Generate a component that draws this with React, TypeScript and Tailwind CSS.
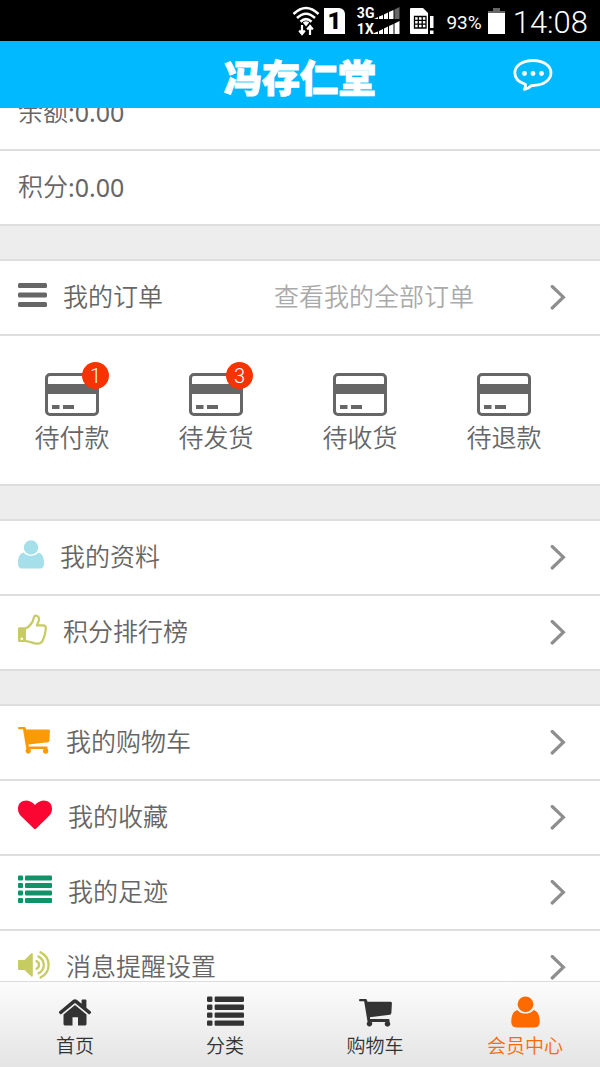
import React from 'react';

type IconProps = { className?: string };

const BarsIcon: React.FC<IconProps> = ({ className }) => (
  <svg className={className} width="29" height="32" viewBox="0 0 29 32" fill="currentColor" aria-hidden="true">
    <rect x="0" y="4" width="29" height="5" rx="1.5" />
    <rect x="0" y="13.5" width="29" height="5" rx="1.5" />
    <rect x="0" y="23" width="29" height="5" rx="1.5" />
  </svg>
);

const UserIcon: React.FC<IconProps & { width?: number; height?: number }> = ({ className, width = 26, height = 32 }) => (
  <svg className={className} width={width} height={height} viewBox="0 0 26 32" fill="currentColor" aria-hidden="true">
    <circle cx="13" cy="8.500" r="7.200" />
    <path d="M5.600 13.600C2 14.400 0 18 0 24.400C0 28 1.800 29.600 5 29.600H21C24.200 29.600 26 28 26 24.400C26 18 24 14.400 20.400 13.600C18.500 15.900 16 16.900 13 16.900C10 16.900 7.500 15.900 5.600 13.600Z" />
  </svg>
);

const ThumbIcon: React.FC<IconProps> = ({ className }) => (
  <svg className={className} width="29" height="32" viewBox="0 0 29 32" fill="none" aria-hidden="true">
    <path d="M0 14.500Q0 13.200 1.300 13.200H8V28H1.300Q0 28 0 26.700Z" fill="currentColor" />
    <circle cx="3.800" cy="24.800" r="1.300" fill="#fff" />
    <path
      d="M8 14.100C11 13.500 12.500 10.300 14.200 8.200C15.800 6.200 15.200 1.700 17.600 1.600C20.800 1.500 21.400 4.600 20.600 7.400C20.100 9 19.200 10 18.800 11.400H25C27.300 11.400 28.200 13 27.700 14.700C27.400 16 27.700 16.700 27.300 18C27 19.300 27 20.100 26.500 21.500C26.200 23 25.900 23.700 25.300 25C24.500 28 23.200 29.400 20 29.600C15.500 30 12.500 27.400 8 27.100"
      stroke="currentColor"
      strokeWidth="2.200"
      strokeLinejoin="round"
    />
  </svg>
);

const CartIcon: React.FC<IconProps & { width?: number; height?: number }> = ({ className, width = 32, height = 32 }) => (
  <svg className={className} width={width} height={height} viewBox="0 0 32 32" fill="currentColor" aria-hidden="true">
    <path d="M1 3H6.500Q7.500 3 7.800 4L8.200 5.600H30.500Q32 5.600 31.900 7L31.400 16.500Q31.200 18 29.900 18.200L10.500 20.600L10.800 22.400H28.500Q29.600 22.400 29.600 23.400V25.300Q30.300 26 30.300 27A2.700 2.700 0 1 1 24.900 27Q24.900 25.800 25.800 25.100H12.200Q12.900 25.800 12.900 27A2.700 2.700 0 1 1 8.300 24.900L5 5.200H1Q0 5.200 0 4.100Q0 3 1 3Z" />
  </svg>
);

const HeartIcon: React.FC<IconProps> = ({ className }) => (
  <svg className={className} width="34" height="32" viewBox="0 0 34 32" fill="currentColor" aria-hidden="true">
    <path d="M17 30Q16.300 30 15.800 29.500L4 18.100C1.300 15.500 0 12.800 0 9.900C0 4.500 3.400 1.500 8.600 1.500C12 1.500 14.800 3.700 17 6.100C19.200 3.700 22 1.500 25.400 1.500C30.600 1.500 34 4.500 34 9.900C34 12.800 32.700 15.500 30 18.100L18.200 29.500Q17.700 30 17 30Z" />
  </svg>
);

const ListIcon: React.FC<IconProps & { width?: number; height?: number }> = ({ className, width = 34, height = 32 }) => (
  <svg
    className={className}
    width={width}
    height={height}
    viewBox="0 0 34 32"
    preserveAspectRatio="none"
    fill="currentColor"
    aria-hidden="true"
  >
    {[1.5, 9, 16.5, 24].map((y) => (
      <g key={y}>
        <rect x="0" y={y} width="5" height="5" rx="1" />
        <rect x="7" y={y} width="27" height="5" rx="1" />
      </g>
    ))}
  </svg>
);

const VolumeIcon: React.FC<IconProps> = ({ className }) => (
  <svg className={className} width="32" height="32" viewBox="0 0 32 32" fill="none" aria-hidden="true">
    <path d="M0 12Q0 11 1 11H6.500L13 4.500Q14.800 3.200 14.800 5.300V26.500Q14.800 28.500 13 27.200L6.500 20.900H1Q0 20.900 0 19.900Z" fill="currentColor" />
    <g stroke="currentColor" strokeWidth="2.300" strokeLinecap="round">
      <path d="M18.500 12.100Q21 13.500 21 15.900T18.500 19.700" />
      <path d="M20.500 7.500Q25.800 10.500 25.800 15.900T20.500 24.300" />
      <path d="M22.500 3.300Q30.600 7.500 30.600 15.900T22.500 28.500" />
    </g>
  </svg>
);

const HomeIcon: React.FC<IconProps> = ({ className }) => (
  <svg className={className} width="34" height="32" viewBox="0 0 34 32" fill="currentColor" aria-hidden="true">
    <path d="M5.500 18.500L17 9L28.500 18.500V28Q28.500 29.400 27.100 29.400H20V21.300H14.500V29.400H6.900Q5.500 29.400 5.500 28Z" />
    <path d="M15.200 3.800Q17 2.500 18.800 3.800L23.600 7.800V4.200Q23.600 3.400 24.400 3.400H27.600Q28.400 3.400 28.400 4.200V11.800L32.800 15.500Q33.500 16.200 32.900 16.900L31.900 18.100Q31.200 18.700 30.500 18.100L17 7L3.500 18.100Q2.800 18.700 2.100 18.100L1.100 16.900Q.500 16.200 1.200 15.500Z" />
  </svg>
);

const CardIcon: React.FC<IconProps> = ({ className }) => (
  <svg className={className} width="54" height="43" viewBox="0 0 54 43" aria-hidden="true">
    <rect x="1.500" y="1.500" width="51" height="40" rx="3.500" fill="none" stroke="currentColor" strokeWidth="3" />
    <path d="M1 11H53V21H1ZM7 32H14.500V36H7ZM18 32H29V36H18Z" fill="currentColor" />
  </svg>
);

const Chevron: React.FC<IconProps> = ({ className }) => (
  <svg className={className} width="16" height="26" viewBox="0 0 16 26" fill="none" aria-hidden="true">
    <path d="M2.200 1.500L13.400 12.200L2.200 23" stroke="#8e8e8e" strokeWidth="3.200" strokeLinecap="round" />
  </svg>
);

const ChatIcon: React.FC = () => (
  <svg width="42" height="34" viewBox="0 0 42 34" fill="none" aria-hidden="true">
    <path
      d="M21 3.500C31 3.500 39 8.500 39 15.800C39 23.200 31 28.500 21 28.500H19.500C17.500 30.700 15.500 31.800 12.500 32.500C13.400 30.700 13.600 29.300 13.400 27.300C7 25.300 2.800 21.100 2.800 15.800C2.800 8.500 11 3.500 21 3.500Z"
      stroke="#fff"
      strokeWidth="2.800"
      strokeLinejoin="round"
    />
    <g fill="#fff">
      <circle cx="12.500" cy="16.500" r="2.400" />
      <circle cx="21" cy="16.500" r="2.400" />
      <circle cx="29.500" cy="16.500" r="2.400" />
    </g>
  </svg>
);

const StatusBar: React.FC = () => (
  <div className="flex h-[41px] shrink-0 items-center justify-end bg-black pr-3 text-white">
    <svg width="28" height="30" viewBox="0 0 28 30" fill="none" aria-hidden="true">
      <g stroke="#fff" strokeWidth="2.600">
        <path d="M1.500 8Q14-4 26.500 8" />
        <path d="M5 12Q14 3.500 23 12" />
        <path d="M8.500 15.700Q14 10.500 19.500 15.700" />
      </g>
      <path d="M14 20.500L10.800 16.500Q14 14 17.200 16.500Z" fill="#fff" />
      <path d="M10 19V27M7.200 24.500L10 28L12.800 24.500M18 29V21M15.200 23.500L18 20L20.800 23.500" stroke="#fff" strokeWidth="2.200" />
    </svg>
    <div className="ml-1 flex h-[26px] w-[21px] items-center justify-center rounded-tr-md bg-white text-2xl font-black leading-none text-black">
      1
    </div>
    <div className="ml-3 text-sm font-bold leading-4">
      <div>3G</div>
      <div>1X</div>
    </div>
    <svg width="26" height="28" viewBox="0 0 26 28" fill="#fff" aria-hidden="true">
      <path d="M0 12L4 10V12ZM5 9.500L9 8V12H5ZM10 7.500L14 5.500V12H10ZM15 5L19.500 3V12H15Z" />
      <path d="M20.500 2.500L25.500 0V12H20.500Z" fill="#666" />
      <path d="M0 26L4 24.500V27H0ZM5 24L9 22V27H5ZM10 21.500L14 19.500V27H10ZM15 19L19.500 17V27H15ZM20.500 16.500L25.500 14V27H20.500Z" />
    </svg>
    <svg className="ml-2.5" width="24" height="26" viewBox="0 0 24 26" fill="#fff" aria-hidden="true">
      <path d="M0 1Q0 0 1 0H13L18 5V26H1Q0 26 0 25Z" />
      <path d="M4.500 8.500H16V20H4.500ZM4.500 12.300H16M4.500 16.200H16M8.300 8.500V20M12.200 8.500V20" fill="none" stroke="#000" strokeWidth="1.300" />
      <path d="M20 8H23.500V20H20ZM20 22.500H23.500V26H20Z" />
    </svg>
    <span className="ml-3 pt-1 text-[19px] leading-none">93%</span>
    <svg className="ml-1.5" width="17" height="26" viewBox="0 0 17 26" aria-hidden="true">
      <path d="M5 0H12V3H17V6H0V3H5Z" fill="#666" />
      <path d="M0 5H17V26H0Z" fill="#fff" />
    </svg>
    <time className="ml-2 pt-1 text-[31px] font-[350] leading-none">14:08</time>
  </div>
);

const BalanceRow: React.FC<{ label: string; value: string }> = ({ label, value }) => (
  <div className="flex h-[75px] items-center border-b-2 border-[#dedede] bg-white px-[18px]">
    <span>{label}</span>
    <span className="font-['Noto_Sans',sans-serif] font-normal">:{value}</span>
  </div>
);

interface MenuRowProps {
  icon: React.ReactNode;
  label: string;
  hint?: string;
}

const MenuRow: React.FC<MenuRowProps> = ({ icon, label, hint }) => (
  <a href="#" className="flex h-[75px] items-center border-b-2 border-[#dedede] bg-white pl-[18px] pr-[34px]">
    <span className="mb-1.5">{icon}</span>
    <span className="ml-4">{label}</span>
    {hint && <span className="ml-auto mr-[76px] text-[#aaa]">{hint}</span>}
    <Chevron className={hint ? '' : 'ml-auto'} />
  </a>
);

const Group: React.FC<{ children: React.ReactNode }> = ({ children }) => (
  <section className="mt-[33px] border-t-2 border-[#dedede]">{children}</section>
);

const orders = [
  { label: '待付款', count: 1 },
  { label: '待发货', count: 3 },
  { label: '待收货', count: 0 },
  { label: '待退款', count: 0 },
];

const tabs = [
  { label: '首页', icon: <HomeIcon />, active: false },
  { label: '分类', icon: <ListIcon width={37} height={34} />, active: false },
  { label: '购物车', icon: <CartIcon width={35} height={33} />, active: false },
  { label: '会员中心', icon: <UserIcon width={29} height={35} />, active: true },
];

export default function App() {
  return (
    <div className="flex h-screen flex-col overflow-hidden bg-[#ededed] font-['Roboto','Noto_Sans_CJK_SC',sans-serif] text-[#666]">
      <StatusBar />

      <header className="relative z-10 flex h-[67px] shrink-0 items-center justify-center bg-[#00b9ff]">
        <h1 className="pt-2 text-[38px] font-black leading-none text-white [-webkit-text-stroke:1px_white]">冯存仁堂</h1>
        <button type="button" aria-label="消息" className="absolute right-[46px] top-4">
          <ChatIcon />
        </button>
      </header>

      <main className="min-h-0 flex-1 overflow-hidden text-[25px] font-[350]">
        {/* list is scrolled, the first row slides under the header */}
        <section className="-mt-8">
          <BalanceRow label="余额" value="0.00" />
          <BalanceRow label="积分" value="0.00" />
        </section>

        <Group>
          <MenuRow icon={<BarsIcon />} label="我的订单" hint="查看我的全部订单" />
          <div className="grid grid-cols-4 border-b-2 border-[#dedede] bg-white pb-[25px] pr-6 pt-[37px]">
            {orders.map((order) => (
              <a key={order.label} href="#" className="flex flex-col items-center">
                <span className="relative">
                  <CardIcon />
                  {order.count > 0 && (
                    <span className="absolute -right-2.5 -top-[11px] flex size-[27px] items-center justify-center rounded-full bg-[#f73302] text-xl leading-none text-white">
                      {order.count}
                    </span>
                  )}
                </span>
                <span className="mt-[3px] leading-10">{order.label}</span>
              </a>
            ))}
          </div>
        </Group>

        <Group>
          <MenuRow icon={<UserIcon className="text-[#a5e0ea]" />} label="我的资料" />
          <MenuRow icon={<ThumbIcon className="text-[#c6cb62]" />} label="积分排行榜" />
        </Group>

        <Group>
          <MenuRow icon={<CartIcon className="text-[#fb9a07]" />} label="我的购物车" />
          <MenuRow icon={<HeartIcon className="text-[#fb0533]" />} label="我的收藏" />
          <MenuRow icon={<ListIcon className="text-[#11936a]" />} label="我的足迹" />
          <MenuRow icon={<VolumeIcon className="text-[#c6cb62]" />} label="消息提醒设置" />
        </Group>
      </main>

      <nav className="grid shrink-0 grid-cols-4 border-t border-[#dcdcdc] bg-linear-to-b from-[#fcfcfc] to-[#e4e4e4] pb-2 pt-3.5 text-[19px] font-[350]">
        {tabs.map((tab) => (
          <a key={tab.label} href="#" className={`flex flex-col items-center ${tab.active ? 'text-[#fd6a02]' : 'text-[#333]'}`}>
            <span className="flex h-8 items-center">{tab.icon}</span>
            <span className="mt-[7px] leading-6">{tab.label}</span>
          </a>
        ))}
      </nav>
    </div>
  );
}
